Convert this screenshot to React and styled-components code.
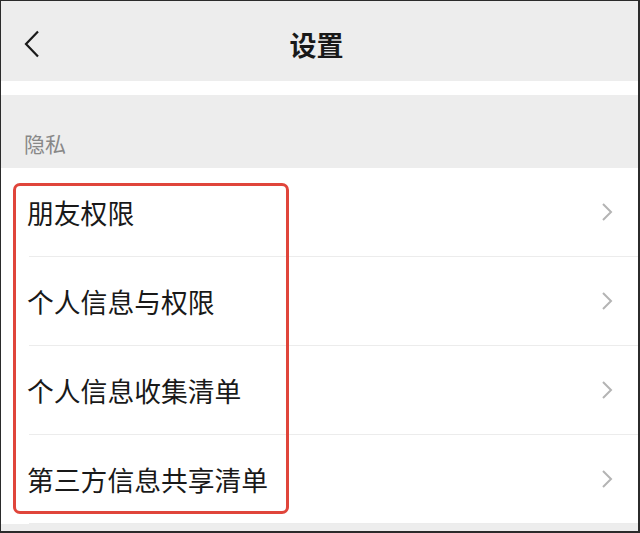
import React from "react";
import styled, { createGlobalStyle } from "styled-components";

// 设置 > 隐私 页面

const GlobalStyle = createGlobalStyle`
    body{
        margin: 0;
        font-family: "Noto Sans CJK SC", "Noto Sans", sans-serif;
        background: #fff;
    }
`;

const Frame = styled.div`
    width: 640px;
    height: 533px;
    box-sizing: border-box;
    border: 1px solid #2b2b2b;
    border-right-width: 2px;
    border-bottom-width: 2px;
    background: #ededed;
    display: flex;
    flex-direction: column;
    overflow: hidden;
`;

const Header = styled.div`
    height: 80px;
    flex-shrink: 0;
    box-sizing: border-box;
    padding-top: 6px;
    display: grid;
    grid-template-columns: 1fr auto 1fr;
    align-items: center;
    background: #ededed;
`;

const BackButton = styled.div`
    display: flex;
    align-items: center;
    padding-left: 23px;
`;

const Title = styled.h1`
    margin: 0 6px 0 0;
    font-size: 27px;
    font-weight: 600;
    color: #191919;
`;

const Spacer = styled.div`
    height: 14px;
    flex-shrink: 0;
    background: #fff;
`;

const SectionLabel = styled.div`
    height: 73px;
    flex-shrink: 0;
    box-sizing: border-box;
    display: flex;
    align-items: flex-end;
    padding: 0 0 10px 23px;
    font-size: 21px;
    color: #888;
`;

const List = styled.div`
    position: relative;
    background: #fff;
    flex-shrink: 0;
`;

const Row = styled.div`
    height: 88px;
    margin-left: 28px;
    padding-right: 25px;
    display: flex;
    align-items: center;
    justify-content: space-between;
    border-bottom: 1px solid #ececec;
    font-size: 26.8px;
    color: #191919;
    span{
        margin-left: -2px;
    }
    &:last-child{
        border-bottom: none;
    }
`;

const Highlight = styled.div`
    position: absolute;
    left: 12px;
    top: 15px;
    width: 276px;
    height: 331px;
    box-sizing: border-box;
    border: 3px solid #e0453b;
    border-radius: 7px;
    pointer-events: none;
`;

const items = ["朋友权限", "个人信息与权限", "个人信息收集清单", "第三方信息共享清单"];

const BackIcon = () => (
    <svg width="16" height="28" viewBox="0 0 16 28">
        <polyline points="14,1.5 2,14 14,26.5" fill="none" stroke="#1a1a1a" strokeWidth="2.2" />
    </svg>
);

const Arrow = () => (
    <svg width="12" height="20" viewBox="0 0 12 20">
        <polyline points="2,2 10,10 2,18" fill="none" stroke="#b4b4b4" strokeWidth="2" />
    </svg>
);

const App = () => {
    return (
        <>
            <GlobalStyle />
            <Frame>
                <Header>
                    <BackButton><BackIcon /></BackButton>
                    <Title>设置</Title>
                    <div />
                </Header>
                <Spacer />
                <SectionLabel>隐私</SectionLabel>
                <List>
                    {items.map((text) => (
                        <Row key={text}>
                            <span>{text}</span>
                            <Arrow />
                        </Row>
                    ))}
                    <Highlight />
                </List>
            </Frame>
        </>
    );
};

export default App;
